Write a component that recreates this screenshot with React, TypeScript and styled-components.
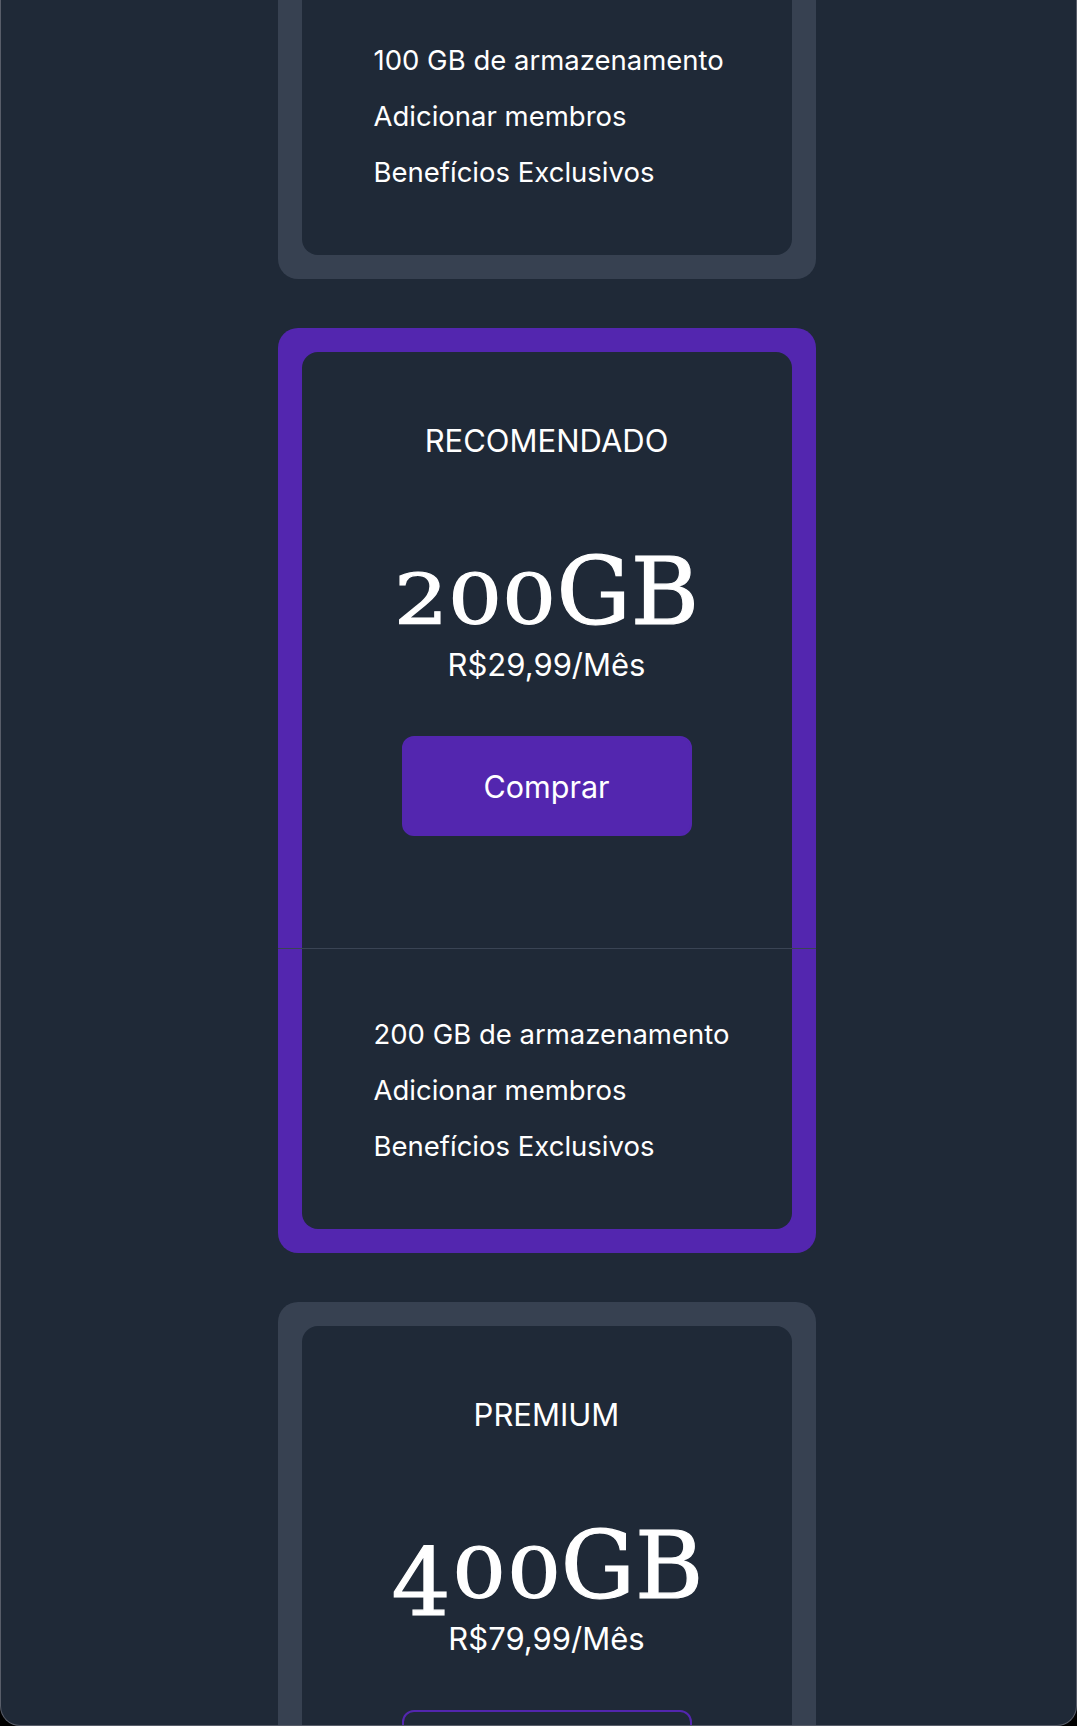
import React from "react";
import styled, { createGlobalStyle } from "styled-components";

const Global = createGlobalStyle`
  html, body { margin: 0; padding: 0; background: #000; }
  body { font-family: Inter, "Noto Sans", sans-serif; color: #fff; }
  * { box-sizing: border-box; }
`;

const Frame = styled.div`
  height: 1726px;
  overflow: hidden;
  background: #1f2937;
  border: 1px solid #585d69;
  border-top: none;
  border-radius: 0 0 20px 20px;
  display: flex;
  justify-content: center;
  padding-left: 16px;
`;

const Stack = styled.div`
  margin-top: -646px;
  width: 538px;
  display: flex;
  flex-direction: column;
  gap: 49px;
`;

const Card = styled.section<{ $featured?: boolean }>`
  background: ${(p) => (p.$featured ? "#5326af" : "#374151")};
  padding: 24px;
  border-radius: 20px;
`;

const Inner = styled.div`
  background: #1f2937;
  border-radius: 16px;
  display: flex;
  flex-direction: column;
`;

const Top = styled.div`
  display: flex;
  flex-direction: column;
  align-items: center;
  padding: 71px 0 112px;
`;

const Label = styled.h3`
  margin: 0;
  font-family: Inter, sans-serif;
  font-weight: 400;
  font-size: 31px;
  line-height: 36px;
  text-transform: uppercase;
`;

const Size = styled.div`
  margin-top: 87px;
  font-family: "DejaVu Serif", "Liberation Serif", serif;
  font-size: 93px;
  line-height: 93px;
  height: 93px;
  white-space: nowrap;
  -webkit-text-stroke: 1.2px #fff;
`;

const Fig = styled.span<{ $drop?: boolean }>`
  display: inline-block;
  font-size: ${(p) => (p.$drop ? "1em" : "0.75em")};
  transform: ${(p) => (p.$drop ? "translateY(17px)" : "scaleX(1.22)")};
  margin: ${(p) => (p.$drop ? "0 0.02em" : "0 0.07em")};
`;

const Price = styled.div`
  margin-top: 8px;
  font-size: 31px;
  line-height: 36px;
`;

const Buy = styled.button<{ $filled?: boolean }>`
  margin-top: 53px;
  width: 290px;
  height: 100px;
  border-radius: 12px;
  border: 2px solid #5326af;
  background: ${(p) => (p.$filled ? "#5326af" : "transparent")};
  color: #fff;
  font-family: Inter, sans-serif;
  font-size: 30.5px;
  cursor: pointer;
`;

const Divider = styled.hr`
  margin: 0 -24px;
  border: none;
  height: 1px;
  background: #3a4454;
`;

const Features = styled.ul`
  list-style: none;
  margin: 0;
  padding: 57px 0 55px 72px;
`;

const Feature = styled.li`
  font-size: 27.5px;
  line-height: 56px;
`;

type Plan = {
  label: string;
  size: string;
  price: string;
  featured?: boolean;
};

const plans: Plan[] = [
  { label: "Básico", size: "100GB", price: "R$9,99/Mês" },
  { label: "Recomendado", size: "200GB", price: "R$29,99/Mês", featured: true },
  { label: "Premium", size: "400GB", price: "R$79,99/Mês" },
];

const DROPS = "3479";

function SizeText({ text }: { text: string }) {
  const digits = text.replace(/GB$/, "");
  return (
    <Size>
      {digits.split("").map((d, i) => (
        <Fig key={i} $drop={DROPS.includes(d)}>
          {d}
        </Fig>
      ))}
      GB
    </Size>
  );
}

function PlanCard({ plan }: { plan: Plan }) {
  const gb = plan.size.replace("GB", " GB");
  return (
    <Card $featured={plan.featured}>
      <Inner>
        <Top>
          <Label>{plan.label}</Label>
          <SizeText text={plan.size} />
          <Price>{plan.price}</Price>
          <Buy $filled={plan.featured}>Comprar</Buy>
        </Top>
        <Divider />
        <Features>
          <Feature>{gb} de armazenamento</Feature>
          <Feature>Adicionar membros</Feature>
          <Feature>Benefícios Exclusivos</Feature>
        </Features>
      </Inner>
    </Card>
  );
}

export default function App() {
  return (
    <>
      <Global />
      <Frame>
        <Stack>
          {plans.map((p) => (
            <PlanCard key={p.label} plan={p} />
          ))}
        </Stack>
      </Frame>
    </>
  );
}
